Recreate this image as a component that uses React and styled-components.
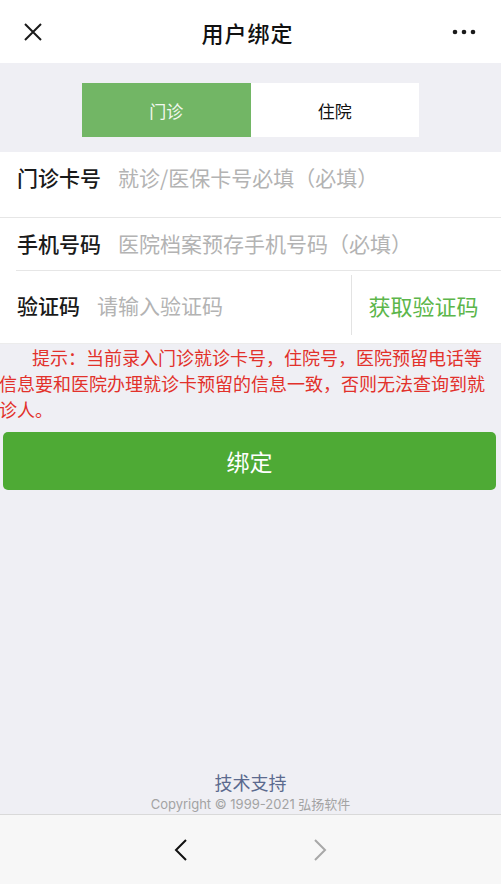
import { createGlobalStyle, styled } from 'styled-components'

const GlobalStyle = createGlobalStyle`
  html, body {
    margin: 0;
    padding: 0;
  }
  body {
    font-family: "Noto Sans CJK SC", "Noto Sans", sans-serif;
    background: #efeff4;
    text-spacing-trim: space-all;
  }
`

const Page = styled.div`
  height: 100vh;
  display: flex;
  flex-direction: column;
  background: #efeff4;
`

// top navigation bar
const NavBar = styled.div`
  height: 63px;
  flex-shrink: 0;
  background: #fff;
  display: flex;
  align-items: center;
  justify-content: space-between;
  padding: 0 25px 0 23px;
`

const NavTitle = styled.div`
  font-size: 22px;
  font-weight: 500;
  color: #111;
  letter-spacing: 1px;
  margin-left: -4px;
`

const IconSlot = styled.div`
  width: 24px;
  height: 24px;
  display: flex;
  align-items: center;
  justify-content: ${(p) => (p.$right ? 'flex-end' : 'flex-start')};
`

const Tabs = styled.div`
  display: flex;
  width: 337px;
  height: 54px;
  margin: 20px auto 0;
  background: #fff;
`

const Tab = styled.div`
  flex: 1;
  display: flex;
  align-items: center;
  justify-content: center;
  font-size: 17px;
  background: ${(p) => (p.$active ? '#72b665' : '#fff')};
  color: ${(p) => (p.$active ? '#f2f8ef' : '#111')};
`

const Form = styled.div`
  margin-top: 15px;
  background: #fff;
  border-bottom: 1px solid #ececec;
`

const Row = styled.div`
  display: flex;
  align-items: ${(p) => (p.$top ? 'flex-start' : 'center')};
  height: ${(p) => p.$h}px;
  box-sizing: border-box;
  padding-bottom: ${(p) => p.$pb || 0}px;
  margin-left: ${(p) => (p.$inset ? '16px' : '0')};
  padding-left: ${(p) => (p.$inset ? '1px' : '17px')};
  border-bottom: ${(p) => (p.$line ? '1px solid #e6e6e6' : 'none')};
`

const Label = styled.span`
  font-size: 21px;
  line-height: 50px;
  font-weight: 500;
  color: #1a1a1a;
  width: ${(p) => p.$w}px;
  flex-shrink: 0;
`

const Placeholder = styled.span`
  font-size: 21px;
  line-height: 50px;
  color: #b3b3b3;
  flex: 1;
  white-space: nowrap;
`

const CodeButton = styled.div`
  height: 60px;
  width: 150px;
  border-left: 1px solid #e3e3e3;
  display: flex;
  align-items: center;
  justify-content: center;
  font-size: 22px;
  color: #5cb64a;
  padding-right: 6px;
  box-sizing: border-box;
`

const Hint = styled.p`
  margin: 0 9px 0 -1px;
  font-size: 18px;
  line-height: 26px;
  text-indent: 33px;
  color: #e2312b;
`

const BindButton = styled.button`
  margin: 10px 5px 0 3px;
  height: 58px;
  border: none;
  border-radius: 5px;
  background: #4eaa35;
  color: #fff;
  font-family: inherit;
  font-size: 23px;
  flex-shrink: 0;
`

const Spacer = styled.div`
  flex: 1;
`

const Footer = styled.div`
  display: flex;
  flex-direction: column;
  align-items: center;
`

const SupportLink = styled.div`
  font-size: 18px;
  line-height: 24px;
  color: #5b6a8e;
`

const Copyright = styled.div`
  font-family: Inter, "Noto Sans CJK SC", sans-serif;
  font-size: 13px;
  line-height: 20px;
  color: #a3a3a3;
`

const ToolBar = styled.div`
  height: 69px;
  flex-shrink: 0;
  border-top: 1px solid #d9d9d9;
  background: #f7f7f7;
  display: flex;
  align-items: center;
  justify-content: center;
  gap: 125px;
  padding-right: 1px;
`

const Chevron = ({ dir, color }) => (
  <svg width="14" height="22" viewBox="0 0 14 22">
    <path
      d={dir === 'left' ? 'M12 1 L2 11 L12 21' : 'M2 1 L12 11 L2 21'}
      fill="none"
      stroke={color}
      strokeWidth="2"
    />
  </svg>
)

export default function App() {
  return (
    <>
      <GlobalStyle />
      <Page>
        <NavBar>
          <IconSlot>
            <svg width="20" height="20" viewBox="0 0 20 20">
              <path d="M2 2 L18 18 M18 2 L2 18" stroke="#1a1a1a" strokeWidth="2" />
            </svg>
          </IconSlot>
          <NavTitle>用户绑定</NavTitle>
          <IconSlot $right>
            <svg width="24" height="6" viewBox="0 0 24 6">
              <circle cx="3" cy="3" r="2.3" fill="#1a1a1a" />
              <circle cx="12" cy="3" r="2.3" fill="#1a1a1a" />
              <circle cx="21" cy="3" r="2.3" fill="#1a1a1a" />
            </svg>
          </IconSlot>
        </NavBar>

        <Tabs>
          <Tab $active>门诊</Tab>
          <Tab>住院</Tab>
        </Tabs>

        <Form>
          <Row $h={66} $top $line>
            <Label $w={101}>门诊卡号</Label>
            <Placeholder>就诊/医保卡号必填（必填）</Placeholder>
          </Row>
          <Row $h={53} $pb={3} $inset $line>
            <Label $w={101}>手机号码</Label>
            <Placeholder>医院档案预存手机号码（必填）</Placeholder>
          </Row>
          <Row $h={72} $pb={5} $inset>
            <Label $w={80}>验证码</Label>
            <Placeholder>请输入验证码</Placeholder>
            <CodeButton>获取验证码</CodeButton>
          </Row>
        </Form>

        <Hint>
          提示：当前录入门诊就诊卡号，住院号，医院预留电话等信息要和医院办理就诊卡预留的信息一致，否则无法查询到就诊人。
        </Hint>

        <BindButton>绑定</BindButton>

        <Spacer />

        <Footer>
          <SupportLink>技术支持</SupportLink>
          <Copyright>Copyright © 1999-2021 弘扬软件</Copyright>
        </Footer>

        <ToolBar>
          <Chevron dir="left" color="#111" />
          <Chevron dir="right" color="#a8a8a8" />
        </ToolBar>
      </Page>
    </>
  )
}
